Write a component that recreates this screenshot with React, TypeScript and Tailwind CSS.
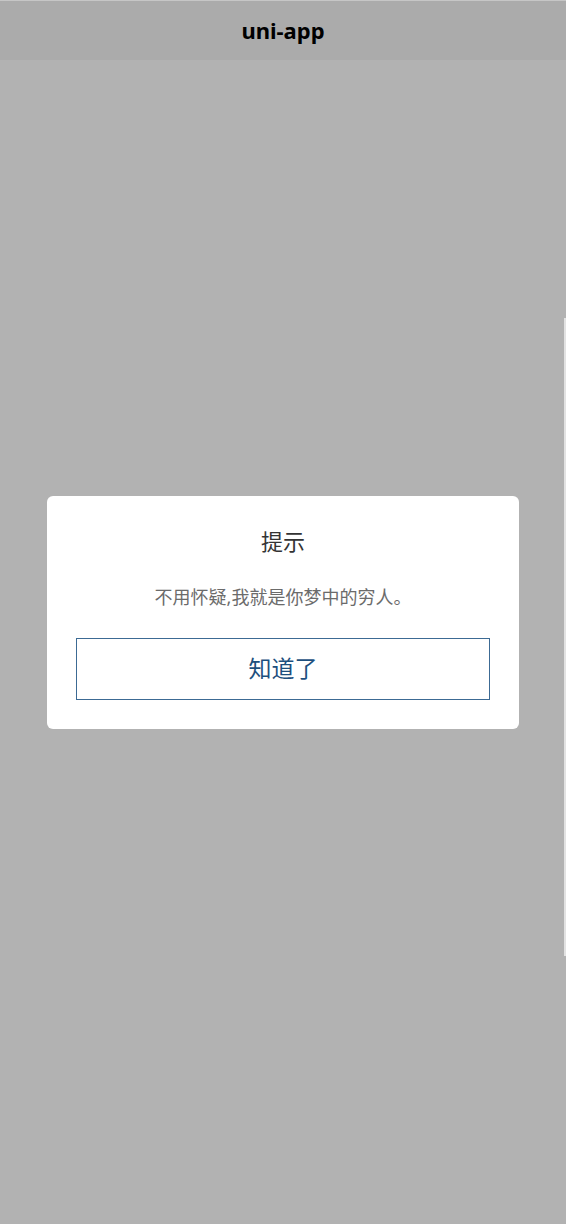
export default function App() {
  return (
    <div
      className="relative h-[1224px] w-full overflow-hidden bg-[#b2b2b2]"
      style={{ fontFamily: '"Noto Sans", "Noto Sans CJK SC", sans-serif' }}
    >
      {/* nav bar under the mask */}
      <div className="flex h-[60px] items-center justify-center border-t border-[#c6c6c6] bg-[#ababab]">
        <span className="text-[22px] font-bold text-black">uni-app</span>
      </div>

      {/* thin strip at the right edge */}
      <div className="absolute right-0 top-[318px] h-[638px] w-[2px] bg-[#e2e2e2]" />

      {/* modal */}
      <div className="absolute inset-0 flex items-center justify-center">
        <div className="flex w-[472px] flex-col items-center rounded-[6px] bg-white px-[29px] pb-[29px] pt-[30px]">
          <div className="text-[22px] leading-[30px] text-[#333]">提示</div>
          <div className="mt-[29px] text-[18px] leading-[24px] text-[#6b6b6b]">
            不用怀疑,我就是你梦中的穷人。
          </div>
          <button className="mt-[29px] flex h-[62px] w-full items-center justify-center border border-[#3c6a94] bg-white text-[23px] text-[#1d4f7e]">
            知道了
          </button>
        </div>
      </div>
    </div>
  );
}
